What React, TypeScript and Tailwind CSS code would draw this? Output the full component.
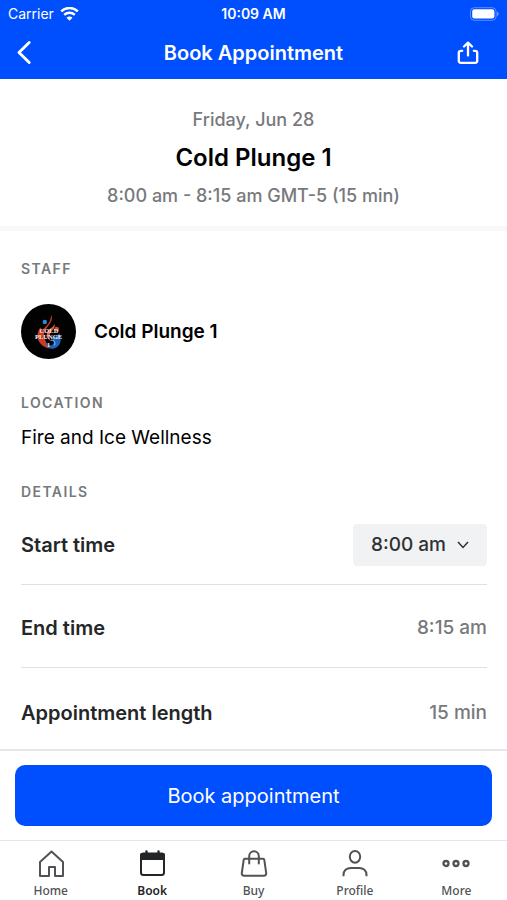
import type { ReactNode } from 'react';
import { useState } from 'react';

function WifiIcon() {
  return (
    <svg width="19" height="14" viewBox="0 0 19 14" fill="none" stroke="#fff" aria-hidden="true">
      <path d="M1.2 4.4a12 12 0 0 1 16.6 0" strokeWidth="2.6" />
      <path d="M4.2 7.8a7.7 7.7 0 0 1 10.6 0" strokeWidth="2.4" />
      <path d="M9.5 13.8 6.5 10.8a4.2 4.2 0 0 1 6 0Z" fill="#fff" stroke="none" />
    </svg>
  );
}

function BatteryIcon() {
  return (
    <svg width="30" height="14" viewBox="0 0 30 14" fill="none" aria-hidden="true">
      <rect x="1.5" y="0.7" width="25.6" height="12.6" rx="3.8" stroke="#fff" strokeOpacity="0.35" />
      <rect x="3.2" y="2.2" width="22.2" height="9.2" rx="2.2" fill="#fff" />
      <path d="M28.2 4.8c1.8.6 1.8 3.8 0 4.4Z" fill="#fff" fillOpacity="0.5" />
    </svg>
  );
}

function BackIcon() {
  return (
    <svg width="16" height="26" viewBox="0 0 16 26" fill="none" stroke="#fff" strokeWidth="2.9" strokeLinecap="round" strokeLinejoin="round" aria-hidden="true">
      <path d="M13.2 2.5 3 12.500 13.2 22.500" />
    </svg>
  );
}

function ShareIcon() {
  return (
    <svg width="22" height="24" viewBox="0 0 22 24" fill="none" stroke="#fff" strokeWidth="2.3" strokeLinecap="round" strokeLinejoin="round" aria-hidden="true">
      <path d="M11 14.500V2M7 5.500 11 1.600l4 3.900" />
      <path d="M5.200 9.800H3.800A2 2 0 0 0 1.800 11.800v8A2 2 0 0 0 3.800 21.800h14.400a2 2 0 0 0 2-2v-8a2 2 0 0 0-2-2h-1.400" />
    </svg>
  );
}

function StaffLogo() {
  return (
    <svg width="55" height="55" viewBox="0 0 55 55" role="img" aria-label="Cold Plunge logo" className="shrink-0">
      <circle cx="27.5" cy="27.5" r="27.5" fill="#020203" />
      <path d="M30 10.500c2.400 5-.4 8.600-3.400 12.200-3.600 4.400-4.700 8.200-2 14.300 1.300 3 3 5.200 4 7.600-6.600-1-12-6.200-12.200-12.600-.1-3.600 1.600-5.800 2.700-8.600 1.300 1 1.500 2.200 1.400 3.400 5-4.600 9.800-8.800 9.500-16.300Z" fill="#c63d25" />
      <path d="M33.500 20c1.200 4-2.400 6-4.400 9.400-1.500 2.700-1 5.200.4 7.600-3.600-2.400-4.800-6.200-2.800-9.800 1.700-2.900 6-4 6.800-7.200Z" fill="#e2603c" />
      <circle cx="23.8" cy="18" r="2.2" fill="#2f86dc" />
      <circle cx="35.6" cy="25.2" r="2.4" fill="#d8452c" />
      <path d="M38.500 29.500c2.600 6.200 1.200 13.600-6 15.200-5 .6-7.500-2.600-7-6 1.400 2.400 3.400 3.200 5.400 2.400 3.400-1.600 1.600-6-.9-7.100 4.500-1 5.800-2.300 8.500-4.500Z" fill="#1e62b8" />
      <path d="M29.500 36.500c3.500-1.200 5.800 2.400 3.600 4.800" fill="none" stroke="#58a8ee" strokeWidth="1.2" />
      <g fill="#f3eeee" fontFamily="'Liberation Serif', serif" fontWeight="700" textAnchor="middle">
        <text x="28" y="28.5" fontSize="6.5">COLD</text>
        <text x="27.5" y="35" fontSize="6.5">PLUNGE</text>
        <text x="27.5" y="42.5" fontSize="7">1</text>
      </g>
    </svg>
  );
}

const tabStroke = { fill: 'none', stroke: 'currentColor', strokeWidth: 2 } as const;

const tabs: { name: string; icon: ReactNode }[] = [
  {
    name: 'Home',
    icon: <path {...tabStroke} strokeLinejoin="round" d="M4 13 15.500 2.500 27 13V27h-8v-9h-6v9H4Z" />,
  },
  {
    name: 'Book',
    icon: (
      <>
        <rect {...tabStroke} x="4" y="4.5" width="23" height="21.5" rx="2.5" />
        <path fill="currentColor" d="M3 11V6a2 2 0 0 1 2-2h21a2 2 0 0 1 2 2v5Z" />
        <path {...tabStroke} strokeWidth={2.4} strokeLinecap="round" d="M9.500 5V2.500M21.500 5V2.500" />
      </>
    ),
  },
  {
    name: 'Buy',
    icon: (
      <>
        <path {...tabStroke} strokeLinejoin="round" d="M6 9.800h18a1.300 1.300 0 0 1 1.300 1.100l1.900 13.200a2.300 2.300 0 0 1-2.300 2.700H5.100a2.300 2.300 0 0 1-2.300-2.700l1.900-13.200A1.300 1.300 0 0 1 6 9.800Z" />
        <path {...tabStroke} strokeLinecap="round" d="M10.200 14.500V7a4.800 4.800 0 0 1 9.600 0v7.500" />
      </>
    ),
  },
  {
    name: 'Profile',
    icon: (
      <>
        <ellipse {...tabStroke} cx="15" cy="7.8" rx="5.2" ry="5.9" />
        <path {...tabStroke} d="M3.500 27.300v-1.300c0-4.400 3-7 7.500-7h8c4.500 0 7.500 2.600 7.500 7v1.300" />
      </>
    ),
  },
  {
    name: 'More',
    icon: (
      <>
        <circle {...tabStroke} strokeWidth={2.300} cx="5" cy="14.500" r="2.500" />
        <circle {...tabStroke} strokeWidth={2.300} cx="15" cy="14.500" r="2.500" />
        <circle {...tabStroke} strokeWidth={2.300} cx="25" cy="14.500" r="2.500" />
      </>
    ),
  },
];

function SectionTitle({ children }: { children: ReactNode }) {
  return <h3 className="text-sm leading-5 font-semibold tracking-widest text-[#77797c] uppercase">{children}</h3>;
}

function DetailRow({ label, children }: { label: ReactNode; children: ReactNode }) {
  return (
    <div className="flex h-[83px] items-center justify-between border-b border-[#dfe0e1] pt-1 text-[19px] leading-7 font-medium text-[#77797c] last:h-[81px] last:border-b-0 last:pt-2">
      <span className="text-xl leading-7 font-semibold text-[#252628]">{label}</span>
      {children}
    </div>
  );
}

export default function App() {
  const [start, setStart] = useState('8:00 am');

  return (
    <div className="flex min-h-screen flex-col bg-white font-['Inter',sans-serif] text-black">
      <header className="bg-[#004fff] text-white">
        <div className="grid h-[27px] grid-cols-3 items-center px-2 text-sm leading-5">
          <div className="flex items-center gap-1.5">
            <span>Carrier</span>
            <WifiIcon />
          </div>
          <span className="text-center font-semibold">10:09 AM</span>
          <div className="flex justify-end">
            <BatteryIcon />
          </div>
        </div>
        <div className="flex h-[52px] items-center justify-between px-4">
          <button type="button" aria-label="Back" className="flex w-[46px]">
            <BackIcon />
          </button>
          <h1 className="text-xl leading-7 font-semibold">Book Appointment</h1>
          <button type="button" aria-label="Share" className="flex w-[46px] justify-center">
            <ShareIcon />
          </button>
        </div>
      </header>

      <main className="flex-1">
        <section className="flex flex-col items-center gap-2 border-b-5 border-[#f7f8f8] pt-[27px] pb-4 text-lg leading-7 font-medium text-[#77797c]">
          <p>Friday, Jun 28</p>
          <h2 className="text-2xl leading-8 font-semibold text-black">Cold Plunge 1</h2>
          <p>8:00 am - 8:15 am GMT-5 (15 min)</p>
        </section>

        <div className="pt-7 pr-5 pl-[21px]">
          <SectionTitle>Staff</SectionTitle>
          <div className="mt-[25px] mb-[34px] flex items-center gap-[18px]">
            <StaffLogo />
            <span className="text-[19px] leading-7 font-semibold">Cold Plunge 1</span>
          </div>
          <SectionTitle>Location</SectionTitle>
          <p className="mt-[11px] mb-[30px] text-[19px] leading-7">Fire and Ice Wellness</p>
          <SectionTitle>Details</SectionTitle>
          <DetailRow label={<label htmlFor="start">Start time</label>}>
            <div className="relative">
              <select
                id="start"
                value={start}
                onChange={(event) => setStart(event.target.value)}
                className="h-[42px] w-[134px] appearance-none rounded bg-[#f1f2f3] pl-[18px] text-[19px] leading-7 font-medium text-[#303133]"
              >
                <option>8:00 am</option>
                <option>8:15 am</option>
              </select>
              <svg className="pointer-events-none absolute top-[17px] right-[18px]" width="12" height="8" viewBox="0 0 12 8" fill="none" stroke="#303133" strokeWidth="1.5" aria-hidden="true">
                <path d="m1 1 5 5.500L11 1" />
              </svg>
            </div>
          </DetailRow>
          <DetailRow label="End time">
            <span>8:15 am</span>
          </DetailRow>
          <DetailRow label="Appointment length">
            <span>15 min</span>
          </DetailRow>
        </div>
      </main>

      <div className="sticky bottom-0 bg-white">
        <div className="border-t-2 border-[#e5e6e7] px-[15px] pt-3.5 pb-3.5">
          <button type="button" className="h-[61px] w-full rounded-[10px] bg-[#004fff] text-xl leading-7 text-white">
            Book appointment
          </button>
        </div>
        <nav className="flex h-[60px] border-t border-[#e5e6e7] font-['Noto_Sans',sans-serif]">
          {tabs.map(({ name, icon }) => (
            <a
              key={name}
              href={`#${name.toLowerCase()}`}
              aria-current={name === 'Book' ? 'page' : undefined}
              className="flex flex-1 flex-col items-center gap-1 pt-2 text-xs leading-4 font-medium text-[#505255] aria-[current=page]:font-semibold aria-[current=page]:text-[#242527]"
            >
              <svg width="30" height="30" viewBox="0 0 30 30" aria-hidden="true">
                {icon}
              </svg>
              {name}
            </a>
          ))}
        </nav>
      </div>
    </div>
  );
}
